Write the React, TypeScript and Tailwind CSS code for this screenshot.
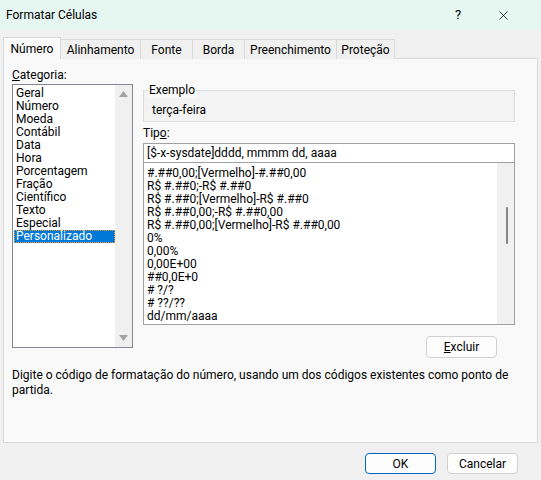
import { X } from "lucide-react";

const categorias = [
  "Geral",
  "Número",
  "Moeda",
  "Contábil",
  "Data",
  "Hora",
  "Porcentagem",
  "Fração",
  "Científico",
  "Texto",
  "Especial",
  "Personalizado",
];

const tipos = [
  "#.##0,00;[Vermelho]-#.##0,00",
  "R$ #.##0;-R$ #.##0",
  "R$ #.##0;[Vermelho]-R$ #.##0",
  "R$ #.##0,00;-R$ #.##0,00",
  "R$ #.##0,00;[Vermelho]-R$ #.##0,00",
  "0%",
  "0,00%",
  "0,00E+00",
  "##0,0E+0",
  "# ?/?",
  "# ??/??",
  "dd/mm/aaaa",
];

const tabs = ["Alinhamento", "Fonte", "Borda", "Preenchimento", "Proteção"];
const tabWidths = ["w-[80px]", "w-[52px]", "w-[52px]", "w-[92px]", "w-[58px]"];

function Arrow({ up }: { up?: boolean }) {
  return (
    <svg width="9" height="6" viewBox="0 0 9 6" className="block">
      <polygon points={up ? "0,6 9,6 4.5,0" : "0,0 9,0 4.5,6"} fill="#a3a3a3" />
    </svg>
  );
}

export default function App() {
  return (
    <div
      className="w-[541px] h-[480px] bg-[#f0f0f0] flex flex-col text-[12px] text-black overflow-hidden"
      style={{ fontFamily: 'Roboto, "Noto Sans", sans-serif' }}
    >
      {/* title bar */}
      <div className="h-[30px] bg-[#e6f6f1] flex items-center shrink-0">
        <span className="pl-[6px] text-[12px] flex-1">Formatar Células</span>
        <span className="w-[20px] text-center text-[13px] mr-[28px]">?</span>
        <X size={15} strokeWidth={1.2} className="mr-[30px]" />
      </div>

      {/* tabs */}
      <div className="flex items-end pl-[3px] mt-[7px] h-[22px] relative z-10">
        <div className="w-[58px] h-[22px] bg-[#f9f9f9] border border-b-0 border-[#d9d9d9] flex items-center justify-center">
          Número
        </div>
        {tabs.map((t, i) => (
          <div
            key={t}
            className={`${tabWidths[i]} h-[20px] border border-l-0 border-b-0 border-[#d9d9d9] bg-[#f0f0f0] flex items-center justify-center`}
          >
            {t}
          </div>
        ))}
      </div>

      {/* panel */}
      <div className="mx-[3px] -mt-px h-[385px] border border-[#d9d9d9] bg-[#f9f9f9] flex flex-col">
        <div className="flex pl-[8px] pt-[8px]">
          {/* categoria */}
          <div className="w-[121px] flex flex-col">
            <div className="h-[16px] leading-[16px]">
              <span className="underline">C</span>ategoria:
            </div>
            <div className="mt-[1px] h-[264px] border border-[#828790] bg-white flex">
              <div className="flex-1 pt-[2px] pl-[1px]">
                {categorias.map((c) => (
                  <div
                    key={c}
                    className={`h-[13px] leading-[13px] pl-[2px] text-[12px] ${
                      c === "Personalizado"
                        ? "bg-[#0078d7] text-white outline-1 outline-dotted outline-[#f0a030] -outline-offset-1"
                        : ""
                    }`}
                  >
                    {c}
                  </div>
                ))}
              </div>
              <div className="w-[17px] bg-[#f0f0f0] flex flex-col items-center justify-between py-[6px]">
                <Arrow up />
                <Arrow />
              </div>
            </div>
          </div>

          {/* right column */}
          <div className="ml-[10px] w-[372px] flex flex-col">
            <div className="relative mt-[23px] h-[32px] border border-[#dcdcdc] bg-[#f3f3f3]">
              <span className="absolute left-[4px] -top-[9px] px-[1px] bg-[#f9f9f9] leading-[16px]">
                Exemplo
              </span>
              <div className="pl-[8px] pt-[11px] leading-[16px]">terça-feira</div>
            </div>

            <div className="mt-[3px] h-[16px] leading-[16px]">
              Tip<span className="underline">o</span>:
            </div>
            <div className="mt-[2px] h-[20px] border border-[#a0a0a0] bg-white pl-[3px] leading-[18px]">
              [$-x-sysdate]dddd, mmmm dd, aaaa
            </div>
            <div className="h-[162px] border border-t-0 border-[#a0a0a0] bg-white flex">
              <div className="flex-1 pt-[4px] pl-[3px]">
                {tipos.map((t) => (
                  <div key={t} className="h-[13px] leading-[13px] text-[12px] whitespace-nowrap">
                    {t}
                  </div>
                ))}
              </div>
              <div className="w-[17px] bg-[#f0f0f0] flex justify-center pt-[44px]">
                <div className="w-[2px] h-[37px] bg-[#858585] rounded-full ml-[2px]" />
              </div>
            </div>

            <div className="flex justify-end mt-[11px] pr-[18px]">
              <button className="w-[71px] h-[22px] border border-[#d0d0d0] rounded-[4px] bg-[#fdfdfd] text-[12px]">
                <span className="underline">E</span>xcluir
              </button>
            </div>
          </div>
        </div>

        <div className="pl-[8px] pr-[16px] mt-[10px] leading-[15px]">
          Digite o código de formatação do número, usando um dos códigos existentes como ponto de partida.
        </div>
      </div>

      {/* footer buttons */}
      <div className="flex justify-end gap-[11px] pr-[23px] mt-[10px]">
        <button className="w-[71px] h-[21px] border border-[#0067c0] rounded-[4px] bg-[#fdfdfd]">OK</button>
        <button className="w-[71px] h-[21px] border border-[#d0d0d0] rounded-[4px] bg-[#fdfdfd]">Cancelar</button>
      </div>
    </div>
  );
}
